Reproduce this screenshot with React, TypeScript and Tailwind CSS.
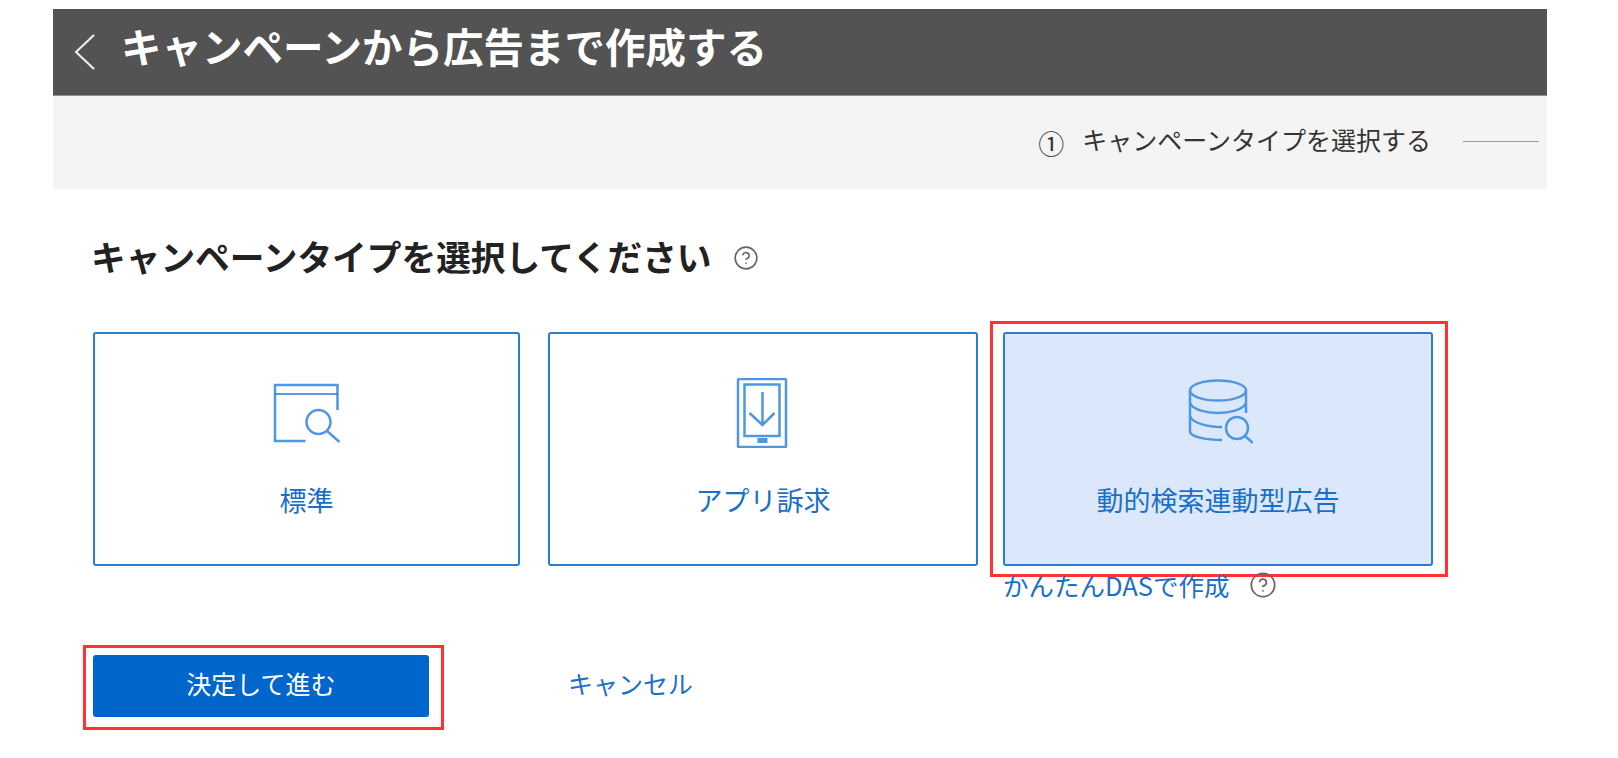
import { CircleHelp } from "lucide-react";

const font = { fontFamily: '"Noto Sans CJK JP", "Noto Sans", sans-serif' };

function WebIcon() {
	return (
		<svg width="70" height="70" viewBox="0 0 70 70" fill="none" stroke="#4f97e0" strokeWidth="2.5">
			<path d="M33.5 63H3V7H65.5V32" />
			<path d="M3 16H65.5" stroke="#2277d2" strokeWidth="1.5" />
			<circle cx="46.5" cy="44" r="12" />
			<path d="M55 53L67.5 64" />
		</svg>
	);
}

function AppIcon() {
	return (
		<svg width="70" height="70" viewBox="0 0 70 70" fill="none" stroke="#4f97e0" strokeWidth="2.5">
			<rect x="10" y="1" width="48" height="68" rx="1" />
			<rect x="16.5" y="6.5" width="35" height="51.5" />
			<path d="M34.5 14V47M21.5 35L34.5 47L46.5 35" />
			<rect x="29.5" y="60" width="10" height="5" fill="#4f97e0" stroke="none" />
		</svg>
	);
}

function DataIcon() {
	return (
		<svg width="70" height="70" viewBox="0 0 70 70" fill="none" stroke="#4f97e0" strokeWidth="2.5">
			<ellipse cx="35" cy="12.5" rx="28" ry="10" />
			<path d="M7 12.5V54C8 59 24 62 39 62" />
			<path d="M63 12.5V35" />
			<path d="M7 25C10 32 24 35 35 35C46 35 60 32 63 25" />
			<path d="M7 38C9 45 24 49 39 49" />
			<circle cx="54" cy="50" r="11" />
			<path d="M62 58L70 65" />
		</svg>
	);
}

function RedFrame({ className }: { className: string }) {
	return <div className={`pointer-events-none absolute border-[3px] border-[#ff3333] ${className}`} />;
}

export default function App() {
	return (
		<div className="min-h-[758px] bg-white pl-[53px] pr-[71px] pt-[9px]" style={font}>
			<div className="flex h-[87px] items-center gap-[26px] border-b border-[#8f8f8f] bg-[#535353] pl-[21px]">
				<svg width="21" height="36" viewBox="0 0 21 36" fill="none" stroke="#f2f2f2" strokeWidth="2">
					<path d="M20 1L2 18L20 35" />
				</svg>
				<h1 className="mb-[12px] text-[40.5px] font-bold leading-none text-white">キャンペーンから広告まで作成する</h1>
			</div>

			<div className="flex h-[93px] items-center justify-end bg-[#f4f4f4] pr-2">
				<span className="text-[26px] leading-none text-[#333]">①</span>
				<span className="mb-[6px] ml-[18px] text-[25px] leading-none text-[#333]">キャンペーンタイプを選択する</span>
				<div className="ml-8 mb-[2px] h-px w-[76px] bg-[#999]" />
			</div>

			<div className="flex items-center gap-[21px] pl-[38px] pt-[48px]">
				<h2 className="pb-[4px] text-[34.7px] font-bold leading-[38px] text-[#222]">キャンペーンタイプを選択してください</h2>
				<CircleHelp size={26} strokeWidth={1.5} className="text-[#666]" />
			</div>

			<div className="flex pl-[40px] pt-[53px]">
				<button className="flex h-[234px] w-[427px] flex-col items-center rounded-[3px] border-2 border-[#2b7dd3] bg-white pt-[44px] text-[27px] leading-none text-[#1a70c8]">
					<WebIcon />
					<span className="mt-[38px]">標準</span>
				</button>
				<button className="ml-[28px] flex h-[234px] w-[430px] flex-col items-center rounded-[3px] border-2 border-[#2b7dd3] bg-white pt-[44px] text-[27px] leading-none text-[#1a70c8]">
					<AppIcon />
					<span className="mt-[38px]">アプリ訴求</span>
				</button>
				<div className="relative ml-[25px]">
					<button className="flex h-[234px] w-[430px] flex-col items-center rounded-[3px] border-2 border-[#2b7dd3] bg-[#dbe8fb] pt-[44px] text-[27px] leading-none text-[#1a70c8]">
						<DataIcon />
						<span className="mt-[38px]">動的検索連動型広告</span>
					</button>
					<RedFrame className="-bottom-[11px] -left-[13px] -right-[15px] -top-[11px]" />
					<div className="absolute left-0 top-[236px] flex items-center gap-[20px]">
						<a className="whitespace-nowrap text-[25.5px] leading-[34px] text-[#1a70c8]">かんたんDASで作成</a>
						<CircleHelp size={28} strokeWidth={1.5} className="text-[#666]" />
					</div>
				</div>
			</div>

			<div className="flex items-center pl-[40px] pt-[89px]">
				<div className="relative">
					<button className="h-[62px] w-[336px] rounded-[3px] bg-[#0066cc] pb-[6px] text-[25px] leading-none text-white">決定して進む</button>
					<RedFrame className="-bottom-[13px] -left-[10px] -right-[15px] -top-[10px]" />
				</div>
				<a className="mb-[6px] ml-[139px] text-[25px] leading-none text-[#1a70c8]">キャンセル</a>
			</div>
		</div>
	);
}
